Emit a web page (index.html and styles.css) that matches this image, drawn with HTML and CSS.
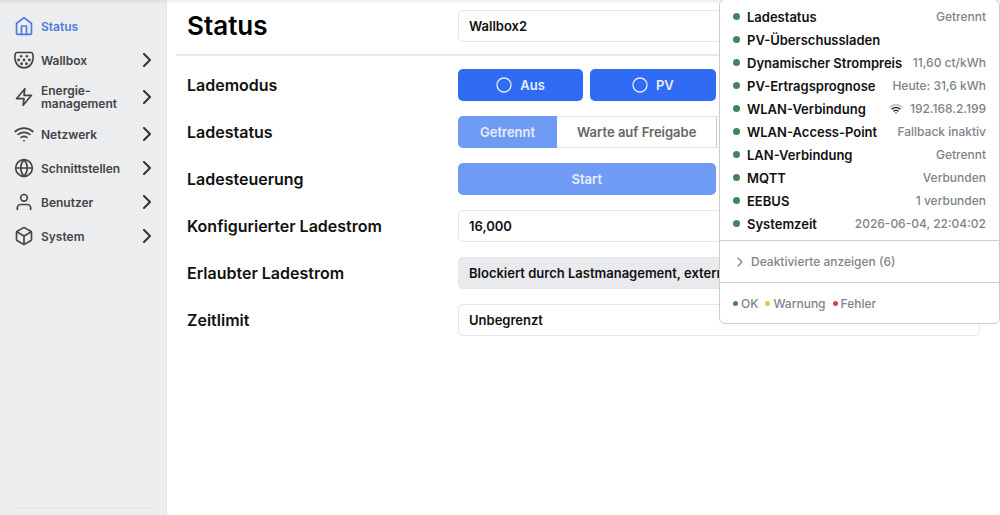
FILE: index.html
```html
<!DOCTYPE html>
<html lang="de">

<head>
    <meta charset="UTF-8">
    <meta name="viewport" content="width=device-width, initial-scale=1.0">
    <title>Status</title>
    <link rel="stylesheet" href="styles.css">
</head>

<body>
    <div class="page">
        <nav class="sidebar">
            <a class="nav-link active" href="#status">
                <svg class="nav-icon" viewBox="0 0 24 24"><path d="M3 9l9-7 9 7v11a2 2 0 0 1-2 2H5a2 2 0 0 1-2-2z"/><path d="M9 22V12h6v10"/></svg>
                <span>Status</span>
            </a>
            <a class="nav-link" href="#wallbox">
                <svg class="nav-icon" viewBox="0 0 24 24">
                    <path d="M3.500 3h17c1.500 0 2.500 2 2.500 6 0 7-4.800 12.500-11 12.500S1 16 1 9c0-4 1-6 2.500-6z"/>
                    <g class="pins"><circle cx="8.500" cy="7.500" r="1.500"/><circle cx="15.500" cy="7.500" r="1.500"/><circle cx="5.500" cy="12" r="1.700"/><circle cx="12" cy="12" r="1.700"/><circle cx="18.500" cy="12" r="1.700"/><circle cx="9" cy="16.500" r="1.700"/><circle cx="15" cy="16.500" r="1.700"/></g>
                </svg>
                <span>Wallbox</span>
                <svg class="chevron" viewBox="0 0 10 14"><path d="M2 1l6 6-6 6"/></svg>
            </a>
            <a class="nav-link" href="#energie">
                <svg class="nav-icon" viewBox="0 0 24 24"><path d="M13 2L3 14h9l-1 8 10-12h-9z"/></svg>
                <span>Energie-<br>management</span>
                <svg class="chevron" viewBox="0 0 10 14"><path d="M2 1l6 6-6 6"/></svg>
            </a>
            <a class="nav-link" href="#netzwerk">
                <svg class="nav-icon" viewBox="0 0 24 24"><path d="M5 12.550a11 11 0 0 1 14.080 0"/><path d="M1.420 9a16 16 0 0 1 21.160 0"/><path d="M8.530 16.110a6 6 0 0 1 6.950 0"/><path d="M12 20h.01"/></svg>
                <span>Netzwerk</span>
                <svg class="chevron" viewBox="0 0 10 14"><path d="M2 1l6 6-6 6"/></svg>
            </a>
            <a class="nav-link" href="#schnittstellen">
                <svg class="nav-icon" viewBox="0 0 24 24"><circle cx="12" cy="12" r="10"/><path d="M2 12h20"/><path d="M12 2a15.300 15.300 0 0 1 4 10 15.300 15.300 0 0 1-4 10 15.300 15.300 0 0 1-4-10 15.300 15.300 0 0 1 4-10z"/></svg>
                <span>Schnittstellen</span>
                <svg class="chevron" viewBox="0 0 10 14"><path d="M2 1l6 6-6 6"/></svg>
            </a>
            <a class="nav-link" href="#benutzer">
                <svg class="nav-icon" viewBox="0 0 24 24"><path d="M20 21v-2a4 4 0 0 0-4-4H8a4 4 0 0 0-4 4v2"/><circle cx="12" cy="7" r="4"/></svg>
                <span>Benutzer</span>
                <svg class="chevron" viewBox="0 0 10 14"><path d="M2 1l6 6-6 6"/></svg>
            </a>
            <a class="nav-link" href="#system">
                <svg class="nav-icon" viewBox="0 0 24 24"><path d="M21 16V8a2 2 0 0 0-1-1.730l-7-4a2 2 0 0 0-2 0l-7 4A2 2 0 0 0 3 8v8a2 2 0 0 0 1 1.730l7 4a2 2 0 0 0 2 0l7-4A2 2 0 0 0 21 16z"/><path d="M3.270 6.960L12 12.010l8.730-5.050"/><path d="M12 22.080V12"/></svg>
                <span>System</span>
                <svg class="chevron" viewBox="0 0 10 14"><path d="M2 1l6 6-6 6"/></svg>
            </a>
            <hr class="sidebar-line">
        </nav>

        <main class="content">
            <header class="row page-header">
                <h1>Status</h1>
                <select class="field" aria-label="Wallbox">
                    <option>Wallbox2</option>
                </select>
            </header>

            <div class="rows">
                <div class="row">
                    <span class="label" id="mode">Lademodus</span>
                    <div class="modes" role="group" aria-labelledby="mode">
                        <button type="button" class="btn"><svg viewBox="0 0 16 16"><circle cx="8" cy="8" r="7"/></svg>Aus</button>
                        <button type="button" class="btn"><svg viewBox="0 0 16 16"><circle cx="8" cy="8" r="7"/></svg>PV</button>
                    </div>
                </div>
                <div class="row">
                    <span class="label" id="state">Ladestatus</span>
                    <div class="states" role="group" aria-labelledby="state">
                        <button type="button" class="state current" disabled>Getrennt</button>
                        <button type="button" class="state" disabled>Warte auf Freigabe</button>
                    </div>
                </div>
                <div class="row">
                    <span class="label" id="control">Ladesteuerung</span>
                    <div class="controls" role="group" aria-labelledby="control">
                        <button type="button" class="btn" disabled>Start</button>
                    </div>
                </div>
                <div class="row">
                    <label class="label" for="current">Konfigurierter Ladestrom</label>
                    <input class="field" id="current" type="text" value="16,000">
                </div>
                <div class="row">
                    <label class="label" for="allowed">Erlaubter Ladestrom</label>
                    <input class="field" id="allowed" type="text" value="Blockiert durch Lastmanagement, externe" readonly>
                </div>
                <div class="row">
                    <label class="label" for="limit">Zeitlimit</label>
                    <select class="field" id="limit">
                        <option>Unbegrenzt</option>
                    </select>
                </div>
            </div>
        </main>
    </div>

    <!-- status menu, opens over the page -->
    <aside class="menu">
        <ul class="status-list">
            <li><i class="dot ok"></i><b>Ladestatus</b><span>Getrennt</span></li>
            <li><i class="dot ok"></i><b>PV-Überschussladen</b></li>
            <li><i class="dot ok"></i><b>Dynamischer Strompreis</b><span>11,60 ct/kWh</span></li>
            <li><i class="dot ok"></i><b>PV-Ertragsprognose</b><span>Heute: 31,6 kWh</span></li>
            <li><i class="dot ok"></i><b>WLAN-Verbindung</b><span><svg class="signal" viewBox="0 0 14 11"><path class="weak" d="M1 4a9 9 0 0 1 12 0"/><path d="M3 6a6 6 0 0 1 8 0M5 8a3 3 0 0 1 4 0M7 10h.01"/></svg>192.168.2.199</span></li>
            <li><i class="dot ok"></i><b>WLAN-Access-Point</b><span>Fallback inaktiv</span></li>
            <li><i class="dot ok"></i><b>LAN-Verbindung</b><span>Getrennt</span></li>
            <li><i class="dot ok"></i><b>MQTT</b><span>Verbunden</span></li>
            <li><i class="dot ok"></i><b>EEBUS</b><span>1 verbunden</span></li>
            <li><i class="dot ok"></i><b>Systemzeit</b><span>2026-06-04, 22:04:02</span></li>
        </ul>
        <button type="button" class="more"><svg viewBox="0 0 6 10"><path d="M1 1l4 4-4 4"/></svg>Deaktivierte anzeigen (6)</button>
        <div class="legend">
            <span><i class="dot ok"></i>OK</span>
            <span><i class="dot warn"></i>Warnung</span>
            <span><i class="dot error"></i>Fehler</span>
        </div>
    </aside>
</body>

</html>
```
FILE: styles.css
```css
* {
    box-sizing: border-box;
}

body {
    margin: 0;
    font-family: Inter, "Liberation Sans", sans-serif;
    font-size: 13px;
    font-weight: 600;
    color: #111;
    background: #fff;
}

button,
input,
select {
    font: inherit;
    margin: 0;
}

svg {
    flex: none;
    fill: none;
    stroke: currentColor;
    stroke-width: 2;
    stroke-linecap: round;
    stroke-linejoin: round;
}

.page {
    display: flex;
    min-height: 100vh;
}

/* sidebar */
.sidebar {
    display: flex;
    flex-direction: column;
    width: 167px;
    flex: none;
    padding: 9px 14px 7px;
    background: linear-gradient(#dcdde0, #ecedef 4px);
    border-right: 1px solid #e4e5e6;
}

.nav-link {
    display: flex;
    align-items: center;
    gap: 7px;
    min-height: 34px;
    padding: 7px 0;
    font-size: 12px;
    line-height: 13px;
    color: #444;
    text-decoration: none;
}

.nav-link.active {
    color: #4b7bdc;
}

.nav-icon {
    width: 20px;
    height: 20px;
}

.pins {
    fill: currentColor;
    stroke: none;
}

.chevron {
    width: 10px;
    height: 14px;
    margin-left: auto;
    color: #333;
}

.sidebar-line {
    width: 100%;
    margin: auto 0 0;
    border: 0;
    border-top: 1px solid #e1e2e4;
}

/* content */
.content {
    flex: 1;
    min-width: 0;
    background: linear-gradient(#ececec, #fff 4px);
}

.row {
    display: grid;
    grid-template-columns: 1fr 2fr;
    gap: 10px;
    align-items: center;
}

.page-header {
    height: 56px;
    margin: 0 9px;
    padding: 0 11px 2px;
    border-bottom: 2px solid #e8e8e8;
}

h1 {
    margin: 0;
    font-size: 26px;
    line-height: 32px;
    font-weight: 600;
    color: #000;
}

.rows {
    display: grid;
    gap: 15px;
    padding: 13px 20px;
}

.label {
    font-size: 16px;
}

.field {
    width: 100%;
    height: 32px;
    padding: 0 10px;
    border: 1px solid #e4e5e7;
    border-radius: 5px;
    background: #fff;
    color: #111;
    appearance: none;
}

.field[readonly] {
    background: #e9eaed;
}

.modes {
    display: grid;
    grid-template-columns: repeat(4, 1fr);
    gap: 7px;
}

.controls {
    display: grid;
    grid-template-columns: repeat(2, 1fr);
    gap: 7px;
}

.btn {
    display: flex;
    align-items: center;
    justify-content: center;
    gap: 8px;
    height: 32px;
    border: 0;
    border-radius: 5px;
    background: #306bf3;
    color: #e6edfd;
}

.btn:disabled {
    background: #709bf5;
}

.btn svg {
    width: 16px;
    height: 16px;
    stroke-width: 1.3;
}

.states {
    display: flex;
    height: 32px;
    border-radius: 5px;
    overflow: hidden;
    box-shadow: inset 0 0 0 1px #e4e5e7;
}

.state {
    padding: 0 20px;
    border: 0;
    border-right: 1px solid #ccc;
    background: none;
    color: #666;
}

.state.current {
    padding: 0 22px;
    border: 0;
    background: #709bf5;
    color: #e6edfd;
}

/* status menu */
.menu {
    position: absolute;
    top: -1px;
    right: 0;
    width: 281px;
    border: 1px solid #ccc;
    border-radius: 6px;
    background: #fff;
    color: #808388;
    font-weight: 500;
}

.status-list {
    margin: 0;
    padding: 5px 13px;
    list-style: none;
}

.status-list li {
    display: flex;
    align-items: center;
    height: 23px;
    white-space: nowrap;
}

.status-list b {
    font-weight: 600;
    color: #111;
}

.status-list span {
    display: flex;
    align-items: center;
    gap: 7px;
    margin-left: auto;
    font-size: 12px;
}

.signal {
    width: 14px;
    height: 11px;
    color: #222;
    stroke-width: 1.4;
}

.weak {
    stroke: #bbb;
}

.dot {
    flex: none;
    width: 7px;
    height: 7px;
    margin-right: 7px;
    border-radius: 50%;
}

.ok {
    background: #458260;
}

.warn {
    background: #e6c447;
}

.error {
    background: #cb444a;
}

.more {
    display: flex;
    align-items: center;
    gap: 8px;
    width: 100%;
    height: 42px;
    padding: 0 17px;
    border: 0;
    border-top: 1px solid #ccc;
    background: none;
    color: inherit;
    font-size: 12px;
}

.more svg {
    width: 6px;
    height: 10px;
    stroke-width: 1.3;
}

.legend {
    display: flex;
    align-items: center;
    gap: 7px;
    height: 41px;
    padding: 0 13px;
    border-top: 1px solid #ccc;
    font-size: 12px;
}

.legend span {
    display: flex;
    align-items: center;
}

.legend .dot {
    width: 5px;
    height: 5px;
    margin-right: 3px;
}
```
